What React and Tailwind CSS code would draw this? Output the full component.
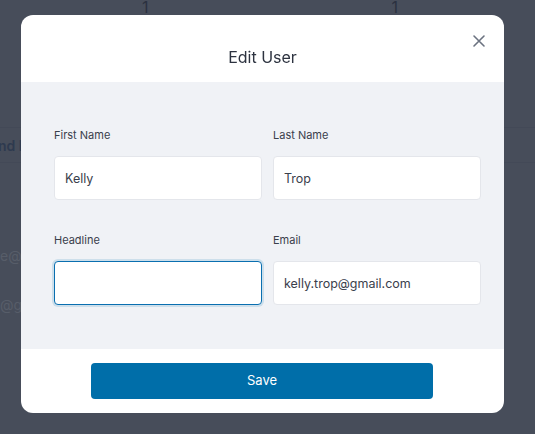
import React, { useState } from 'react';

const Field = ({ label, value, focused }) => (
  <div className="flex flex-col">
    <label className="text-[11px] leading-4 font-normal text-[#3a404c]">{label}</label>
    <input
      type="text"
      defaultValue={value}
      autoFocus={focused}
      className={
        focused
          ? 'mt-[13px] h-[44px] w-full rounded-[4px] border border-[#0a6fb0] bg-white px-[10px] text-[12.5px] text-[#3a404c] outline-none shadow-[0_0_0_2px_rgba(10,111,176,0.15)]'
          : 'mt-[13px] h-[44px] w-full rounded-[4px] border border-[#e4e6eb] bg-white px-[10px] text-[12.5px] text-[#3a404c] outline-none'
      }
    />
  </div>
);

const App = () => {
  const [open, setOpen] = useState(true);

  return (
    <div className="min-h-[434px] w-full bg-[#474d5a] font-['Inter',sans-serif] overflow-hidden">
      {/* page behind the modal, dimmed */}
      <div className="flex flex-col">
        <div className="flex h-[14px] text-[16px] leading-[14px] text-[#2b3140]">
          <span className="ml-[142px]">1</span>
          <span className="ml-[243px]">1</span>
        </div>
        <div className="mt-[113px] border-t border-[#434957] h-[35px] flex items-center text-[14px] font-semibold text-[#2e3a4f]">
          <span className="-ml-[2px]">nd l</span>
        </div>
        <div className="border-t border-[#434957]" />
        <div className="mt-[82px] text-[14px] text-[#575d69]">e@g</div>
        <div className="mt-[28px] text-[14px] text-[#575d69]">@gr</div>
      </div>

      {open && (
        <div className="fixed inset-0 flex items-start justify-center pt-[15px]">
          <div className="w-[483px] -ml-[10px] rounded-xl bg-white overflow-hidden">
            <div className="relative h-[67px] flex items-end justify-center pb-[13px]">
              <h2 className="text-[16px] leading-6 font-normal text-[#2d3340]">Edit User</h2>
              <button
                onClick={() => setOpen(false)}
                className="absolute right-[17px] top-[18px] p-[1px] text-[#6b7280]"
              >
                <svg width="14" height="14" viewBox="0 0 14 14" fill="none" stroke="currentColor" strokeWidth="1.6" strokeLinecap="round">
                  <path d="M2 2l10 10M12 2L2 12" />
                </svg>
              </button>
            </div>

            <div className="bg-[#f0f2f6] pl-[33px] pr-[23px] pt-[45px] pb-[44px]">
              <div className="grid grid-cols-2 gap-x-[11px] gap-y-[32px]">
                <Field label="First Name" value="Kelly" />
                <Field label="Last Name" value="Trop" />
                <Field label="Headline" value="" focused />
                <Field label="Email" value="kelly.trop@gmail.com" />
              </div>
            </div>

            <div className="flex justify-center pt-[14px] pb-[14px] pr-[1px]">
              <button className="h-[36px] w-[342px] rounded-[4px] bg-[#006ea9] text-[13px] text-white">
                Save
              </button>
            </div>
          </div>
        </div>
      )}
    </div>
  );
};

export default App;
